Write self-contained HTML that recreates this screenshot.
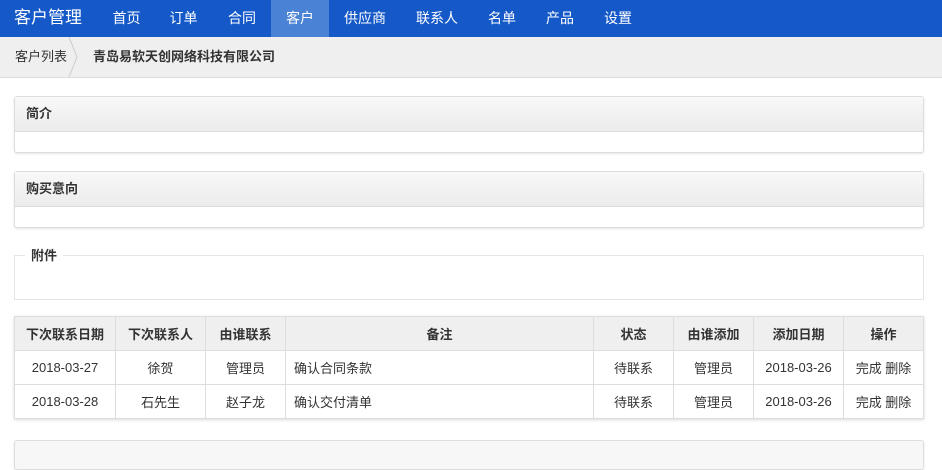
<!DOCTYPE html>
<html><head><meta charset="utf-8"><style>
*{box-sizing:border-box;margin:0;padding:0}
body{width:942px;height:447px;overflow:hidden;background:#fff;font-family:"Liberation Sans","Noto Sans CJK SC",sans-serif;font-size:13px;color:#333;position:relative}
.nav{position:absolute;left:0;top:0;width:942px;height:37px;background:#1558c8;color:#fff}
.nav .brand{position:absolute;left:14px;top:0;line-height:36px;font-size:17px}
.nav a{position:absolute;top:0;height:37px;line-height:36px;font-size:14px;color:#fff;text-align:center}
.nav a.act{background:#4a82d6}
.bc{position:absolute;top:37px;left:0;width:942px;height:41px;background:#efefef;border-bottom:1px solid #ddd}
.bc span{position:absolute;top:0;line-height:39px}
.chev{position:absolute;left:68px;top:0;width:10px;height:40px}
.panel{position:absolute;left:14px;width:910px;border:1px solid #ddd;border-radius:3px;box-shadow:0 1px 2px rgba(0,0,0,.1);background:#fff}
.panel .h{height:35px;line-height:34px;padding-left:11px;font-weight:bold;background:linear-gradient(#f8f8f8,#ececec);border-bottom:1px solid #ddd;font-size:13px}
.fs{position:absolute;left:14px;top:255px;width:910px;height:45px;border:1px solid #e5e5e5}
.fs span{position:absolute;left:10px;top:-11px;background:#fff;padding:0 6px;font-weight:bold}
table{position:absolute;left:14px;top:316px;width:910px;border-collapse:collapse;box-shadow:0 1px 3px rgba(0,0,0,.15)}
td,th{border:1px solid #ddd;height:34px;text-align:center;font-size:13px}
th{background:#efefef}
td.l{text-align:left;padding-left:8px}
</style></head><body>
<div class="nav"><div class="brand">客户管理</div>
<a style="left:98px;width:57px">首页</a><a style="left:155px;width:57px">订单</a><a style="left:213px;width:58px">合同</a><a class="act" style="left:271px;width:58px">客户</a><a style="left:329px;width:72px">供应商</a><a style="left:401px;width:72px">联系人</a><a style="left:473px;width:58px">名单</a><a style="left:531px;width:58px">产品</a><a style="left:589px;width:58px">设置</a></div>
<div class="bc"><span style="left:15px">客户列表</span>
<svg class="chev" viewBox="0 0 10 40"><path d="M1 0 L9 20 L1 40" fill="none" stroke="#ccc"/></svg>
<span style="left:93px;font-weight:bold;color:#333">青岛易软天创网络科技有限公司</span></div>
<div class="panel" style="top:96px;height:57px"><div class="h">简介</div></div>
<div class="panel" style="top:171px;height:57px"><div class="h">购买意向</div></div>
<div class="fs"><span>附件</span></div>
<table>
<tr><th style="width:101px">下次联系日期</th><th style="width:90px">下次联系人</th><th style="width:80px">由谁联系</th><th style="width:308px">备注</th><th style="width:80px">状态</th><th style="width:80px">由谁添加</th><th style="width:90px">添加日期</th><th>操作</th></tr>
<tr><td>2018-03-27</td><td>徐贺</td><td>管理员</td><td class="l">确认合同条款</td><td>待联系</td><td>管理员</td><td>2018-03-26</td><td>完成 删除</td></tr>
<tr><td>2018-03-28</td><td>石先生</td><td>赵子龙</td><td class="l">确认交付清单</td><td>待联系</td><td>管理员</td><td>2018-03-26</td><td>完成 删除</td></tr>
</table>
<div class="panel" style="top:440px;height:30px;background:#f7f7f7"></div>
</body></html>
